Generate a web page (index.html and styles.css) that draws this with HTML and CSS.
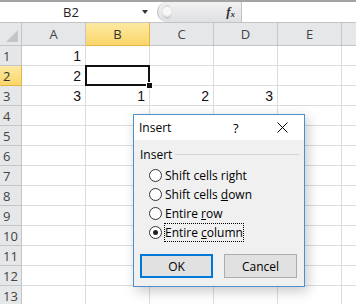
FILE: index.html
```html
<!DOCTYPE html>
<html lang="en">
<head>
  <meta charset="UTF-8">
  <title>Insert</title>
  <link rel="stylesheet" href="styles.css">
</head>
<body>
  <div class="app">
    <div class="topband"></div>
    <div class="fbar">
      <div class="namebox">
        <span class="namebox-text">B2</span>
        <span class="dd-arrow"></span>
      </div>
      <div class="fx-pill">
        <span class="grip"></span>
        <span class="fx">f<sub>x</sub></span>
      </div>
      <div class="finput"></div>
    </div>

    <div class="sheet">
      <div class="corner"><span class="corner-tri"></span></div>
      <div class="colhead">A</div>
      <div class="colhead sel">B</div>
      <div class="colhead">C</div>
      <div class="colhead">D</div>
      <div class="colhead">E</div>
      <div class="colhead last"></div>

      <div class="rowhead">1</div>
      <div class="cell">1</div><div class="cell"></div><div class="cell"></div><div class="cell"></div><div class="cell"></div><div class="cell"></div>

      <div class="rowhead sel">2</div>
      <div class="cell">2</div><div class="cell active"><span class="handle"></span></div><div class="cell"></div><div class="cell"></div><div class="cell"></div><div class="cell"></div>

      <div class="rowhead">3</div>
      <div class="cell">3</div><div class="cell">1</div><div class="cell">2</div><div class="cell">3</div><div class="cell"></div><div class="cell"></div>

      <div class="rowhead">4</div>
      <div class="cell"></div><div class="cell"></div><div class="cell"></div><div class="cell"></div><div class="cell"></div><div class="cell"></div>
      <div class="rowhead">5</div>
      <div class="cell"></div><div class="cell"></div><div class="cell"></div><div class="cell"></div><div class="cell"></div><div class="cell"></div>
      <div class="rowhead">6</div>
      <div class="cell"></div><div class="cell"></div><div class="cell"></div><div class="cell"></div><div class="cell"></div><div class="cell"></div>
      <div class="rowhead">7</div>
      <div class="cell"></div><div class="cell"></div><div class="cell"></div><div class="cell"></div><div class="cell"></div><div class="cell"></div>
      <div class="rowhead">8</div>
      <div class="cell"></div><div class="cell"></div><div class="cell"></div><div class="cell"></div><div class="cell"></div><div class="cell"></div>
      <div class="rowhead">9</div>
      <div class="cell"></div><div class="cell"></div><div class="cell"></div><div class="cell"></div><div class="cell"></div><div class="cell"></div>
      <div class="rowhead">10</div>
      <div class="cell"></div><div class="cell"></div><div class="cell"></div><div class="cell"></div><div class="cell"></div><div class="cell"></div>
      <div class="rowhead">11</div>
      <div class="cell"></div><div class="cell"></div><div class="cell"></div><div class="cell"></div><div class="cell"></div><div class="cell"></div>
      <div class="rowhead">12</div>
      <div class="cell"></div><div class="cell"></div><div class="cell"></div><div class="cell"></div><div class="cell"></div><div class="cell"></div>
      <div class="rowhead">13</div>
      <div class="cell"></div><div class="cell"></div><div class="cell"></div><div class="cell"></div><div class="cell"></div><div class="cell"></div>
    </div>

    <div class="dialog">
      <div class="dlg-title">
        <span class="dlg-caption">Insert</span>
        <span class="dlg-help">?</span>
        <svg class="dlg-close" width="11" height="11" viewBox="0 0 11 11">
          <path d="M0.5 0.5 L10.5 10.5 M10.5 0.5 L0.5 10.5" stroke="#000" stroke-width="1"/>
        </svg>
      </div>
      <div class="dlg-body">
        <div class="group-label"><span>Insert</span><span class="group-line"></span></div>
        <div class="options">
          <label class="opt"><span class="radio"></span><span>Shift cells right</span></label>
          <label class="opt"><span class="radio"></span><span>Shift cells <u>d</u>own</span></label>
          <label class="opt"><span class="radio"></span><span>Entire <u>r</u>ow</span></label>
          <label class="opt"><span class="radio on"></span><span class="focus">Entire <u>c</u>olumn</span></label>
        </div>
        <div class="buttons">
          <button class="btn default">OK</button>
          <button class="btn">Cancel</button>
        </div>
      </div>
    </div>
  </div>
</body>
</html>
```

FILE: styles.css
```css
html, body { margin: 0; padding: 0; }
body { width: 356px; height: 304px; overflow: hidden; background: #fff; font-family: "Open Sans", "Liberation Sans", sans-serif; }
.app { position: relative; width: 356px; height: 304px; overflow: hidden; }

.topband { height: 2px; background: #a3a3a3; }
.fbar { display: flex; height: 20px; border-bottom: 1px solid #c4c4c4; background: #fff; }
.namebox { width: 157px; display: flex; align-items: center; }
.namebox-text { flex: 1; text-align: center; font-size: 13px; color: #222; }
.dd-arrow { width: 0; height: 0; border-left: 3px solid transparent; border-right: 3px solid transparent; border-top: 4px solid #333; margin-right: 9px; }
.fx-pill { width: 84px; display: flex; align-items: center; justify-content: space-between; background: linear-gradient(#f2f2f3, #dfe0e2); border-left: 1px solid #b9bbbe; border-radius: 10px 0 0 10px; box-sizing: border-box; padding: 0 6px 0 4px; }
.grip { width: 10px; height: 14px; border-radius: 50%; background: radial-gradient(circle at 50% 45%, #f8f8f8 0 40%, #c9cbce 70%); }
.fx { font-family: "Liberation Serif", serif; font-style: italic; font-weight: bold; font-size: 13px; color: #333; }
.fx sub { font-size: 9px; vertical-align: -1px; }
.finput { flex: 1; border-left: 1px solid #c4c4c4; }

.sheet { width: 356px; overflow: hidden; display: grid; grid-template-columns: 22px repeat(6, 64px); grid-template-rows: 23px; grid-auto-rows: 20px; font-size: 13px; }
.corner, .colhead, .rowhead { background: #e6e7e9; color: #444; box-sizing: border-box; border-right: 1px solid #c4c5c8; border-bottom: 1px solid #c4c5c8; display: flex; align-items: center; justify-content: center; }
.corner { position: relative; }
.corner-tri { position: absolute; right: 3px; bottom: 3px; width: 0; height: 0; border-left: 12px solid transparent; border-bottom: 12px solid #c3c5c8; }
.colhead.sel, .rowhead.sel { background: linear-gradient(#fde9a2, #f9d66a); border-color: #e2b63f; color: #333; }
.rowhead { justify-content: flex-start; padding-left: 3px; font-size: 13px; }
.cell { box-sizing: border-box; border-right: 1px solid #dadcdd; border-bottom: 1px solid #dadcdd; text-align: right; padding-right: 4px; line-height: 20px; color: #111; font-family: "Liberation Sans", sans-serif; font-size: 14px; }
.cell.active { position: relative; }
.cell.active::after { content: ""; position: absolute; left: -1px; top: -1px; right: -1px; bottom: -1px; border: 2px solid #111; }
.handle { position: absolute; right: -4px; bottom: -4px; width: 5px; height: 5px; background: #111; border: 1px solid #fff; z-index: 2; }

.dialog { position: absolute; left: 133px; top: 114px; width: 172px; height: 173px; box-sizing: border-box; border: 1px solid #4d8fcf; background: #f0f0f0; box-shadow: 3px 4px 12px rgba(0,0,0,0.22); font-family: "Open Sans", "Noto Sans", sans-serif; font-size: 12px; color: #000; }
.dlg-title { height: 25px; background: #fff; display: flex; align-items: center; padding-left: 5px; }
.dlg-caption { flex: 1; }
.dlg-help { width: 20px; font-size: 13px; margin-right: 24px; }
.dlg-close { margin-right: 16px; }
.dlg-body { padding: 6px 5px 0 6px; }
.group-label { display: flex; align-items: center; gap: 3px; height: 16px; }
.group-line { flex: 1; height: 0; border-top: 1px solid #d5d5d5; }
.options { display: flex; flex-direction: column; padding: 4px 0 0 9px; }
.opt { display: flex; align-items: center; height: 19px; gap: 3px; }
.radio { width: 11px; height: 11px; border-radius: 50%; border: 1px solid #333; background: #fff; position: relative; }
.radio.on::after { content: ""; position: absolute; left: 3px; top: 3px; width: 5px; height: 5px; border-radius: 50%; background: #222; }
.focus { outline: 1px dotted #000; outline-offset: 0; }
.buttons { display: flex; gap: 11px; margin-top: 12px; }
.btn { width: 73px; height: 24px; font-family: inherit; font-size: 12px; background: #e1e1e1; border: 1px solid #adadad; padding: 0; color: #000; }
.btn.default { border: 2px solid #0078d7; }
```
